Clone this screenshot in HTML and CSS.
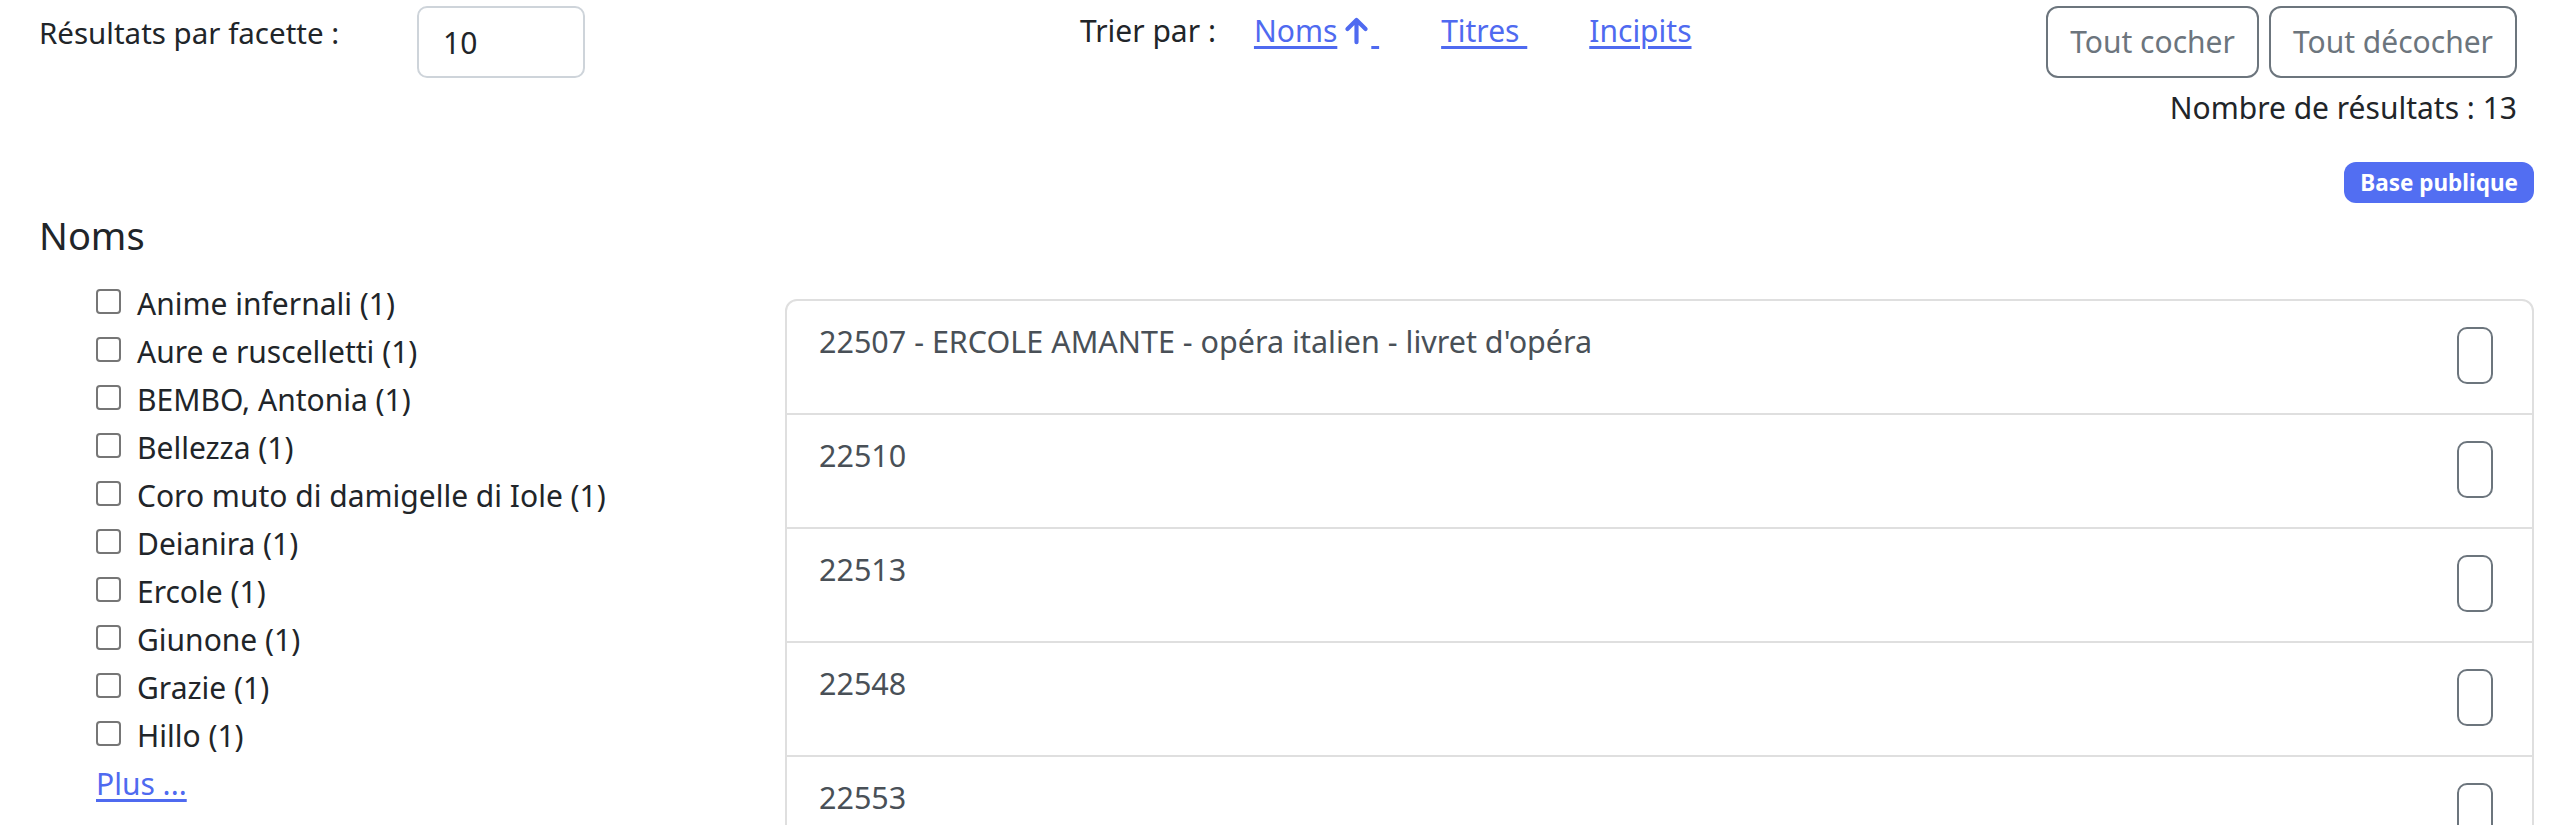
FILE: index.html
```html
<!DOCTYPE html>
<html lang="fr">
<head>
<meta charset="utf-8">
<title>Recherche</title>
<link rel="stylesheet" href="styles.css">
</head>
<body>
<div class="page">
  <div class="topbar">
    <div class="facet-size">
      <label class="facet-label" for="nb">Résultats par facette :</label>
      <input id="nb" class="form-input" type="text" value="10">
    </div>
    <div class="sort">
      <span class="sort-label">Trier par :</span>
      <div class="sort-links">
        <a href="#" class="sort-link">Noms<svg class="sort-arrow" viewBox="0 0 16 16" aria-hidden="true"><path d="M8 14.5V2.2M3 7.2L8 2.2l5 5" fill="none" stroke="currentColor" stroke-width="2.3" stroke-linecap="round" stroke-linejoin="round"/></svg>&nbsp;</a>
        <a href="#" class="sort-link">Titres&nbsp;</a>
        <a href="#" class="sort-link">Incipits</a>
      </div>
    </div>
    <div class="actions">
      <button class="btn-outline" type="button">Tout cocher</button>
      <button class="btn-outline" type="button">Tout décocher</button>
    </div>
  </div>
  <div class="count">Nombre de résultats : 13</div>
  <div class="main">
    <aside class="facets">
      <h5 class="facet-title">Noms</h5>
      <ul class="facet-list">
        <li><label><input type="checkbox">Anime infernali (1)</label></li>
        <li><label><input type="checkbox">Aure e ruscelletti (1)</label></li>
        <li><label><input type="checkbox">BEMBO, Antonia (1)</label></li>
        <li><label><input type="checkbox">Bellezza (1)</label></li>
        <li><label><input type="checkbox">Coro muto di damigelle di Iole (1)</label></li>
        <li><label><input type="checkbox">Deianira (1)</label></li>
        <li><label><input type="checkbox">Ercole (1)</label></li>
        <li><label><input type="checkbox">Giunone (1)</label></li>
        <li><label><input type="checkbox">Grazie (1)</label></li>
        <li><label><input type="checkbox">Hillo (1)</label></li>
      </ul>
      <a class="more" href="#">Plus ...</a>
    </aside>
    <section class="results">
      <div class="badge-row"><span class="badge">Base publique</span></div>
      <div class="result-list">
        <div class="result-item"><span>22507 - ERCOLE AMANTE - opéra italien - livret d'opéra</span><span class="toggle"></span></div>
        <div class="result-item"><span>22510</span><span class="toggle"></span></div>
        <div class="result-item"><span>22513</span><span class="toggle"></span></div>
        <div class="result-item"><span>22548</span><span class="toggle"></span></div>
        <div class="result-item"><span>22553</span><span class="toggle"></span></div>
      </div>
    </section>
  </div>
</div>
</body>
</html>
```
FILE: styles.css
```css
* { box-sizing: border-box; }
html { overflow: hidden; }
body {
  margin: 0;
  font-family: "Noto Sans", "Open Sans", sans-serif;
  font-size: 30px;
  line-height: 48px;
  color: #212529;
  background: #fff;
}
.topbar {
  display: grid;
  grid-template-columns: 1041px 1fr auto;
  padding: 6px 46px 0 39px;
  align-items: start;
}
.facet-size { display: flex; align-items: flex-start; }
.facet-label { width: 378px; flex: none; padding-top: 3px; font-size: 29.5px; }
.form-input {
  width: 168px;
  height: 72px;
  margin: 0;
  border: 2px solid #ced4da;
  border-radius: 10px;
  padding: 0 24px;
  font: inherit;
  color: #212529;
  background: #fff;
}
.sort { display: flex; padding-top: 1px; }
.sort-links { display: flex; gap: 62px; margin-left: 38px; }
.sort-link, .more {
  color: #4f6af0;
  text-decoration: underline;
  text-decoration-thickness: 3px;
  text-underline-offset: 4px;
}
.sort-arrow { width: 29px; height: 31px; vertical-align: -4px; margin-left: 5px; }
.actions { display: flex; gap: 10px; }
.btn-outline {
  height: 72px;
  margin: 0;
  padding: 0 22px;
  border: 2px solid #6c757d;
  border-radius: 12px;
  background: #fff;
  color: #6c757d;
  font: inherit;
}
.count { text-align: right; padding-right: 46px; margin-top: 6px; }
.main { display: flex; padding: 0 29px 0 39px; }
.facets { width: 746px; flex: none; padding-top: 79px; }
.facet-title { margin: 0; font-size: 38px; font-weight: 400; line-height: 48px; }
.facet-list { list-style: none; margin: 21px 0 0 57px; padding: 0; }
.facet-list label { display: flex; align-items: center; gap: 16px; }
.facet-list input {
  appearance: none;
  width: 25px;
  height: 25px;
  margin: 0 0 5px;
  border: 2px solid #767676;
  border-radius: 4px;
  background: #fff;
  flex: none;
}
.more { display: inline-block; margin-left: 57px; }
.results { flex: 1; }
.badge-row { display: flex; justify-content: flex-end; margin-top: 30px; }
.badge {
  background: #526ef2;
  color: #fff;
  font-weight: 700;
  font-size: 22.5px;
  line-height: 23px;
  padding: 9px 16px;
  border-radius: 12px;
}
.result-list { margin-top: 96px; border: 2px solid #dfdfdf; border-radius: 12px; }
.result-item {
  display: flex;
  justify-content: space-between;
  align-items: flex-start;
  min-height: 112px;
  padding: 16px 39px 16px 32px;
  color: #495057;
  font-size: 30.5px;
}
.result-item + .result-item { min-height: 114px; border-top: 2px solid #dfdfdf; }
.toggle {
  width: 36px;
  height: 57px;
  margin-top: 10px;
  border: 2px solid #6c757d;
  border-radius: 10px;
  flex: none;
}
```
